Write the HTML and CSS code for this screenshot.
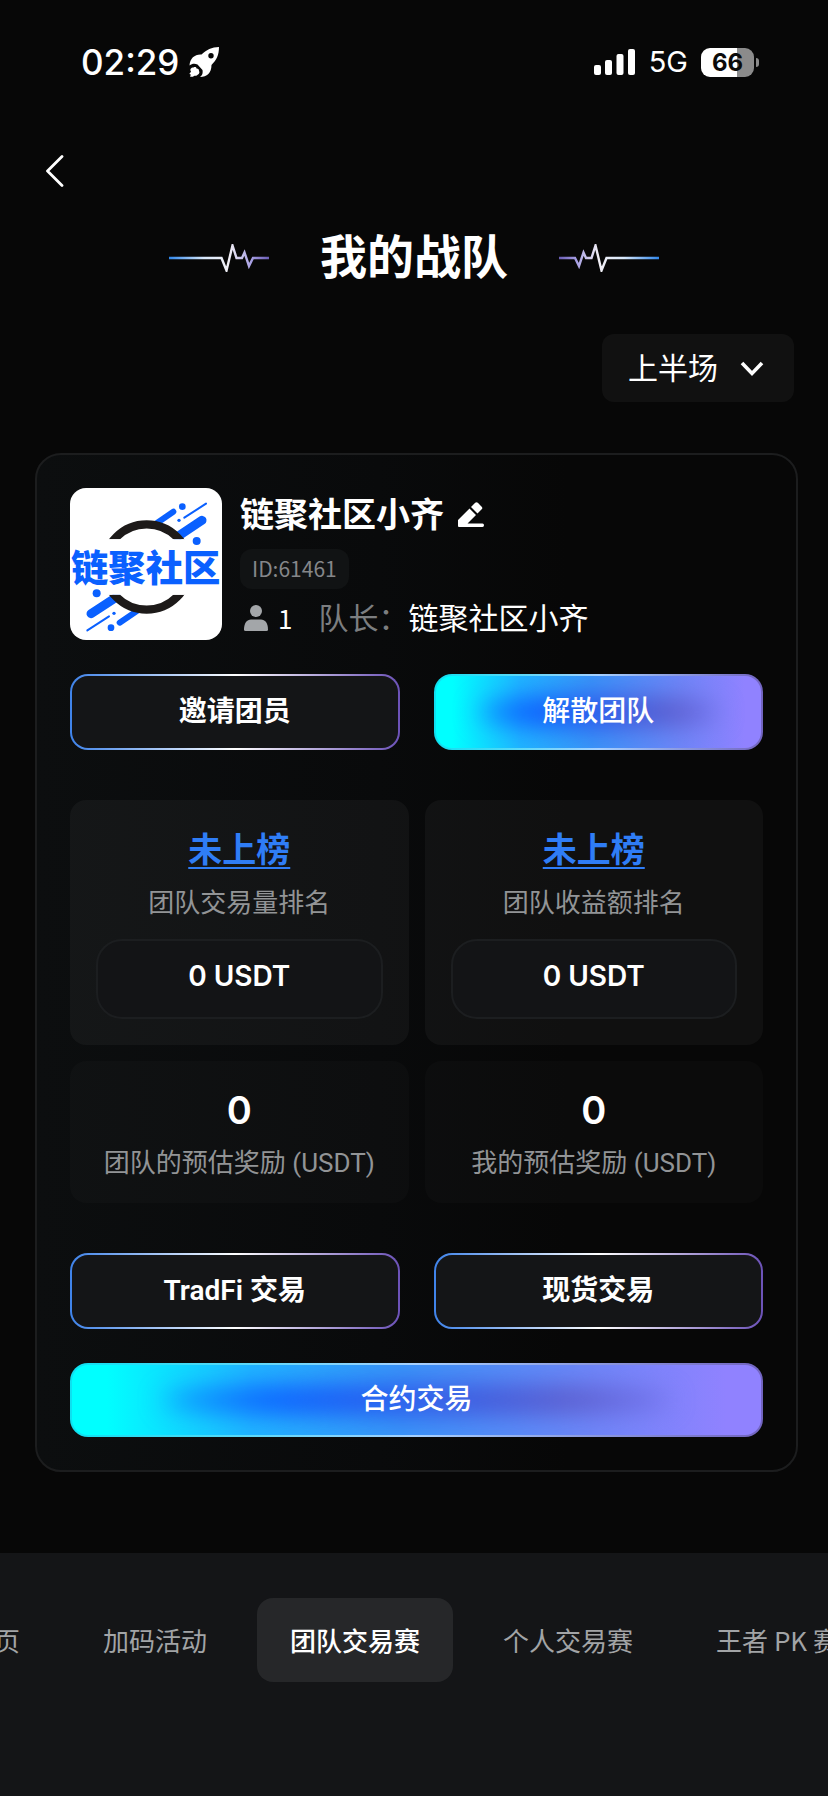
FILE: index.html
```html
<!DOCTYPE html>
<html lang="zh-CN">
<head>
<meta charset="utf-8">
<meta name="viewport" content="width=device-width, initial-scale=1">
<title>我的战队</title>
<link rel="stylesheet" href="styles.css">
</head>
<body>
<header class="status">
  <div class="status-side">
    <span class="time">02:29</span>
    <svg class="rocket" viewBox="0 0 30 30" aria-hidden="true"><path fill="#fff" fill-rule="evenodd" d="M30 0C23 0 17 3 12.500 7.500 6 7 1 11 .5 18.500 3 16.500 6 16.500 8.500 17.500l5 5.500c.5 3 0 5-2.500 7 7 0 11.500-4 11.500-12 5-5 7.500-10 7.500-18ZM22 6a2.700 2.700 0 1 1 0 5.400a2.700 2.700 0 1 1 0-5.400Z"/><path fill="#fff" d="M4.500 20.500c2-1 3 0 3 1 2 0 2.600 1 2.500 2.500 1 1 0 3-1 3.500-2 2-3 1-4 1.500-1 1-3 1-4 .500l1-2c-2 0-1.500-1.500-.5-2l.5-1c-1.500-2 0-4 2.500-4Z"/></svg>
  </div>
  <div class="status-side status-right">
    <svg class="signal" viewBox="0 0 42 26" aria-hidden="true"><g fill="#fff"><rect y="16" width="7" height="10" rx="2"/><rect x="11" y="11" width="7" height="15" rx="2"/><rect x="22.500" y="5" width="7" height="21" rx="2"/><rect x="34" width="7" height="26" rx="2"/></g></svg>
    <span class="network">5G</span>
    <span class="battery"><span class="battery-level">66</span></span>
  </div>
</header>

<div class="topbar">
  <button class="back" type="button" aria-label="返回"><svg viewBox="0 0 18 32" aria-hidden="true"><path d="M16 1.500 1.500 16 16 30.500" fill="none" stroke="#fff" stroke-width="2.800" stroke-linecap="round" stroke-linejoin="round"/></svg></button>
</div>

<main class="page">
  <div class="heading">
    <svg class="pulse" viewBox="0 0 100 28" aria-hidden="true"><defs><linearGradient id="pulse-stroke" gradientUnits="userSpaceOnUse" x1="0" y1="0" x2="100" y2="0"><stop offset="0" stop-color="#2f86ea"/><stop offset=".35" stop-color="#d8e8fb"/><stop offset=".6" stop-color="#f2f0f6"/><stop offset=".82" stop-color="#a79fe2"/><stop offset="1" stop-color="#6a5db5"/></linearGradient></defs><path d="M0 14H52.500L57.500 26.500 63.500 1.500 67.500 14H73L75.500 8.500 80 22 84 14H100" fill="none" stroke="url(#pulse-stroke)" stroke-width="2.400"/></svg>
    <h1 class="title">我的战队</h1>
    <svg class="pulse pulse-flip" viewBox="0 0 100 28" aria-hidden="true"><path d="M0 14H52.500L57.500 26.500 63.500 1.500 67.500 14H73L75.500 8.500 80 22 84 14H100" fill="none" stroke="url(#pulse-stroke)" stroke-width="2.400"/></svg>
  </div>

  <div class="filter">
    <div class="select-wrap">
      <select class="period" aria-label="赛段"><option>上半场</option><option>下半场</option></select>
      <svg class="chevron" viewBox="0 0 24 16" aria-hidden="true"><path d="M2 2 12 12.500 22 2" fill="none" stroke="#fff" stroke-width="3.600"/></svg>
    </div>
  </div>

  <section class="card">
    <div class="team">
      <svg class="avatar" viewBox="0 0 456 456" role="img" aria-label="战队头像">
        <defs><clipPath id="ring-clip"><path d="M0 0H456V154H0ZM0 320H456V456H0Z"/></clipPath></defs>
        <rect width="456" height="456" fill="#fff"/>
        <g stroke="#0a60ff" stroke-linecap="round" fill="none">
          <path d="M322 146 396 97" stroke-width="27"/><path d="M262 104 310 71" stroke-width="18"/><path d="M343 89 408 47" stroke-width="6"/>
          <path d="M63 377 140 327" stroke-width="27"/><path d="M149 404 205 366" stroke-width="18"/><path d="M52 427 117 385" stroke-width="6"/>
        </g>
        <g fill="#0a60ff"><circle cx="337" cy="56" r="10"/><circle cx="327" cy="97" r="5"/><circle cx="380" cy="159" r="12"/><circle cx="80" cy="316" r="12"/><circle cx="132" cy="376" r="5"/><circle cx="123" cy="419" r="10"/></g>
        <g clip-path="url(#ring-clip)"><circle cx="230" cy="237" r="128" fill="#fff" stroke="#1d1a19" stroke-width="25"/></g>
        <path d="M90 154H344V180H90ZM96 296H344V320H96Z" fill="#fff"/>
        <text class="avatar-text" x="227" y="281" text-anchor="middle">链聚社区</text>
      </svg>
      <div class="team-info">
        <div class="name-row">
          <h2 class="team-name">链聚社区小齐</h2>
          <button class="edit" type="button" aria-label="编辑名称"><svg viewBox="0 0 26 26" aria-hidden="true"><g fill="#fff"><path d="M11.500 6.500 18 13 9.500 21.500H24.500Q26 21.500 26 23.200T24.500 25H1Q0 25 0 24V18Z"/><path d="M13 5 17.200.8Q18.500-.5 19.800.8L23.700 4.700Q25 6 23.700 7.300L19.500 11.500Z"/></g></svg></button>
        </div>
        <span class="team-id">ID:61461</span>
        <div class="meta">
          <svg class="person" viewBox="0 0 24 26" aria-hidden="true"><g fill="#a3a6a9"><circle cx="12" cy="6" r="6"/><path d="M0 24.500C0 18 3 14.500 7 14.500H17C21 14.500 24 18 24 24.500Q24 26 22.500 26H1.500Q0 26 0 24.500Z"/></g></svg>
          <span class="count">1</span>
          <span class="leader-label">队长：</span>
          <span>链聚社区小齐</span>
        </div>
      </div>
    </div>

    <div class="actions">
      <button class="btn btn-outline" type="button">邀请团员</button>
      <button class="btn btn-glow" type="button">解散团队</button>
    </div>

    <div class="stats">
      <div class="stat stat-rank"><a class="rank" href="#">未上榜</a><span class="stat-label">团队交易量排名</span><span class="amount">0 USDT</span></div>
      <div class="stat stat-rank"><a class="rank" href="#">未上榜</a><span class="stat-label">团队收益额排名</span><span class="amount">0 USDT</span></div>
      <div class="stat stat-reward"><span class="value">0</span><span class="stat-label">团队的预估奖励 (USDT)</span></div>
      <div class="stat stat-reward"><span class="value">0</span><span class="stat-label">我的预估奖励 (USDT)</span></div>
    </div>

    <div class="actions actions-trade">
      <button class="btn btn-outline" type="button">TradFi 交易</button>
      <button class="btn btn-outline" type="button">现货交易</button>
      <button class="btn btn-glow btn-wide" type="button">合约交易</button>
    </div>
  </section>
</main>

<nav class="tabs" aria-label="活动导航">
  <div class="tab-track">
    <a class="tab" href="#">首页</a>
    <a class="tab" href="#">加码活动</a>
    <a class="tab tab-active" href="#" aria-current="page">团队交易赛</a>
    <a class="tab" href="#">个人交易赛</a>
    <a class="tab" href="#">王者 PK 赛</a>
  </div>
</nav>
</body>
</html>
```

FILE: styles.css
```css
* { box-sizing: border-box; }

body {
  margin: 0;
  min-height: 100vh;
  display: flex;
  flex-direction: column;
  overflow-x: hidden;
  background: #070707;
  color: #fff;
  font-family: Inter, "Noto Sans CJK SC", sans-serif;
}

button, select { font-family: inherit; color: inherit; }
button { cursor: pointer; }
a { color: inherit; text-decoration: none; }
svg { display: block; }

.status {
  height: 124px;
  padding: 0 69px 0 81px;
  display: flex;
  align-items: center;
  justify-content: space-between;
}
.status-side { display: flex; align-items: center; gap: 10px; }
.status-right { gap: 13px; }
.time { font-size: 35px; font-weight: 500; line-height: 44px; }
.rocket { width: 30px; height: 30px; }
.signal { width: 42px; height: 26px; }
.network { font-size: 29px; line-height: 36px; }
.battery { display: flex; align-items: center; gap: 2px; }
.battery-level {
  width: 53px;
  height: 29px;
  border-radius: 9px;
  background: linear-gradient(90deg, #fff 67%, #8b8b8b 67%);
  color: #0b0b0b;
  font-size: 24px;
  font-weight: 700;
  line-height: 29px;
  text-align: center;
}
.battery::after {
  content: "";
  width: 3px;
  height: 9px;
  border-radius: 0 4px 4px 0;
  background: #8b8b8b;
}

.topbar { height: 94px; padding: 0 30px; display: flex; align-items: center; }
.back { padding: 8px 16px; border: 0; background: none; }
.back svg { width: 18px; height: 32px; }

.page { padding: 0 30px; }
.heading { display: flex; align-items: center; justify-content: center; gap: 51px; height: 80px; }
.title { margin: 0; font-size: 47px; font-weight: 700; line-height: 78px; padding-bottom: 2px; }
.pulse { width: 100px; height: 28px; }
.pulse-flip { transform: scaleX(-1); }

.filter { display: flex; justify-content: flex-end; margin-top: 36px; padding-right: 4px; }
.select-wrap { position: relative; }
.period {
  display: block;
  width: 192px;
  height: 68px;
  padding: 0 26px;
  border: 0;
  border-radius: 12px;
  background: #111;
  font-size: 30px;
  appearance: none;
}
.chevron {
  position: absolute;
  top: 27px;
  right: 30px;
  width: 24px;
  height: 16px;
  pointer-events: none;
}

.card {
  margin: 51px 0 0 5px;
  padding: 33px;
  border: 2px solid #1c1d1e;
  border-radius: 26px;
  background: linear-gradient(90deg, #0c0e0f, #090a0b 45%, #070707 70%);
}
.team { display: flex; gap: 18px; }
.avatar { flex: none; width: 152px; height: 152px; border-radius: 16px; }
.avatar-text { font: 900 112px "Noto Sans CJK SC", sans-serif; fill: #0a60ff; }
.team-info {
  display: flex;
  flex-direction: column;
  align-items: flex-start;
  justify-content: space-between;
  padding: 2px 0;
}
.name-row { display: flex; align-items: center; gap: 14px; }
.team-name { margin: 0; font-size: 34px; font-weight: 600; line-height: 50px; }
.edit { padding: 0; border: 0; background: none; }
.edit svg { width: 26px; height: 26px; }
.team-id {
  height: 40px;
  padding: 0 12px;
  border-radius: 12px;
  background: #111314;
  color: #85878a;
  font: 21px/38px "Noto Sans CJK SC", sans-serif;
}
.meta { display: flex; align-items: center; font-size: 30px; line-height: 40px; }
.person { width: 24px; height: 26px; margin: 0 10px 0 4px; }
.count { margin-right: 26px; font-family: "Noto Sans CJK SC", sans-serif; font-size: 26px; }
.leader-label { color: #7c7e80; }

.actions {
  display: grid;
  grid-template-columns: 1fr 1fr;
  gap: 34px;
  margin-top: 34px;
}
.actions-trade { margin-top: 50px; }
.btn {
  height: 76px;
  padding: 0;
  border: 2px solid transparent;
  border-radius: 18px;
  font-family: Roboto, "Noto Sans CJK SC", sans-serif;
  font-size: 28px;
  font-weight: 500;
  line-height: 36px;
}
.btn-outline {
  font-weight: 600;
  background:
    linear-gradient(#141517, #141517) padding-box,
    linear-gradient(90deg, #3f83ea, #fff 50%, #6c52b8) border-box;
}
.btn-glow {
  position: relative;
  isolation: isolate;
  overflow: hidden;
  background:
    linear-gradient(90deg, #0ff 5%, #20b4ff 26%, #3a94f8 48%, #6f85f8 76%, #9082ff 95%) padding-box,
    linear-gradient(90deg, #0de0f0, #a6d0ff 50%, #7264c0) border-box;
}
.btn-glow::before {
  content: "";
  position: absolute;
  z-index: -1;
  inset: 20px 13%;
  border-radius: 50%;
  background: linear-gradient(90deg, #0a80ff, #0a58ff 22%, #2f58e8 50%, #5a58c8 80%, #6a68e0);
  filter: blur(13px);
}
.btn-wide { grid-column: 1 / -1; height: 74px; }

.stats { display: grid; grid-template-columns: 1fr 1fr; gap: 16px; margin-top: 50px; }
.stat { display: flex; flex-direction: column; align-items: center; border-radius: 16px; }
.stat-rank { padding: 26px; background: rgba(255, 255, 255, .04); }
.stat-reward { padding: 25px 20px 22px; background: rgba(255, 255, 255, .02); }
.rank {
  color: #2f7df6;
  font-size: 34px;
  font-weight: 600;
  line-height: 48px;
  text-decoration: underline;
  text-decoration-thickness: 2px;
  text-underline-offset: 5px;
  text-decoration-skip-ink: none;
}
.stat-label {
  margin-top: 11px;
  color: #929496;
  font-family: Roboto, "Noto Sans CJK SC", sans-serif;
  font-size: 26px;
  line-height: 36px;
}
.amount {
  align-self: stretch;
  margin-top: 18px;
  height: 80px;
  border: 2px solid #1c1e20;
  border-radius: 26px;
  background: #131416;
  font-size: 28px;
  font-weight: 600;
  line-height: 70px;
  text-align: center;
}
.value { font-size: 38px; font-weight: 600; line-height: 48px; }

.tabs { flex: 1; margin-top: 81px; padding: 45px 0 114px; overflow: hidden; background: #141517; }
.tab-track { display: flex; gap: 17px; margin-left: -65px; }
.tab {
  flex: none;
  padding: 0 33px;
  border-radius: 16px;
  color: #a2a4a6;
  font: 26px/84px "Noto Sans CJK SC", sans-serif;
}
.tab-active { background: #262729; color: #fff; font-weight: 500; }
```
